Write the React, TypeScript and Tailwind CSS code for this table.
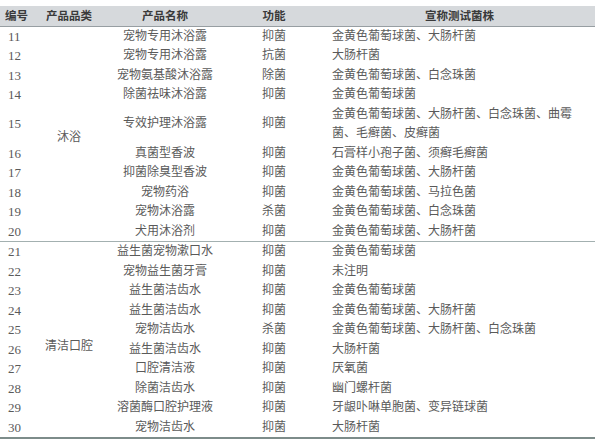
const rows1: [string, string, string, string][] = [
  ['11', '宠物专用沐浴露', '抑菌', '金黄色葡萄球菌、大肠杆菌'],
  ['12', '宠物专用沐浴露', '抗菌', '大肠杆菌'],
  ['13', '宠物氨基酸沐浴露', '除菌', '金黄色葡萄球菌、白念珠菌'],
  ['14', '除菌祛味沐浴露', '抑菌', '金黄色葡萄球菌'],
  ['15', '专效护理沐浴露', '抑菌', '金黄色葡萄球菌、大肠杆菌、白念珠菌、曲霉菌、毛癣菌、皮癣菌'],
  ['16', '真菌型香波', '抑菌', '石膏样小孢子菌、须癣毛癣菌'],
  ['17', '抑菌除臭型香波', '抑菌', '金黄色葡萄球菌、大肠杆菌'],
  ['18', '宠物药浴', '抑菌', '金黄色葡萄球菌、马拉色菌'],
  ['19', '宠物沐浴露', '杀菌', '金黄色葡萄球菌、白念珠菌'],
  ['20', '犬用沐浴剂', '抑菌', '金黄色葡萄球菌、大肠杆菌'],
];

const rows2: [string, string, string, string][] = [
  ['21', '益生菌宠物漱口水', '抑菌', '金黄色葡萄球菌'],
  ['22', '宠物益生菌牙膏', '抑菌', '未注明'],
  ['23', '益生菌洁齿水', '抑菌', '金黄色葡萄球菌'],
  ['24', '益生菌洁齿水', '抑菌', '金黄色葡萄球菌、大肠杆菌'],
  ['25', '宠物洁齿水', '杀菌', '金黄色葡萄球菌、大肠杆菌、白念珠菌'],
  ['26', '益生菌洁齿水', '抑菌', '大肠杆菌'],
  ['27', '口腔清洁液', '抑菌', '厌氧菌'],
  ['28', '除菌洁齿水', '抑菌', '幽门螺杆菌'],
  ['29', '溶菌酶口腔护理液', '抑菌', '牙龈卟啉单胞菌、变异链球菌'],
  ['30', '宠物洁齿水', '抑菌', '大肠杆菌'],
];

function Group({ label, rows, last }: { label: string; rows: [string, string, string, string][]; last?: boolean }) {
  return (
    <tbody className={last ? 'border-b-2 border-[#7d8c8a]' : 'border-b border-[#a3b0b0]'}>
      {rows.map(([no, name, fn, claim], i) => (
        <tr key={no} className="leading-[19.5px] align-middle">
          <td className="pl-[8px] text-[13px] font-['Liberation_Serif',serif]">{no}</td>
          {i === 0 && (
            <td rowSpan={rows.length} className={last ? 'text-center pt-[14px]' : 'text-center pt-[8px]'}>
              {label}
            </td>
          )}
          <td className="text-center">{name}</td>
          <td className="text-center">{fn}</td>
          <td className="pl-[16px]">
            <div className="max-w-[246px]">{claim}</div>
          </td>
        </tr>
      ))}
    </tbody>
  );
}

export default function App() {
  return (
    <div className="w-[600px] h-[448px] bg-white pt-[6px]">
      <table className="w-[595px] table-fixed border-collapse text-[12px] text-[#5a5a5a] font-['Liberation_Serif','Noto_Sans_CJK_SC',serif]">
        <colgroup>
          <col className="w-[40px]" />
          <col className="w-[58px]" />
          <col className="w-[134px]" />
          <col className="w-[84px]" />
          <col />
        </colgroup>
        <thead>
          <tr className="h-[20px] bg-[#d6d9dc] border-b border-[#979ea2] text-[11.5px] font-bold text-[#3a3a3a] font-['Noto_Sans_CJK_SC',sans-serif]">
            <th className="pl-[5px] text-left font-bold">编号</th>
            <th className="text-center font-bold">产品品类</th>
            <th className="text-center font-bold">产品名称</th>
            <th className="text-center font-bold">功能</th>
            <th className="text-center font-bold pl-[8px]">宣称测试菌株</th>
          </tr>
        </thead>
        <Group label="沐浴" rows={rows1} />
        <Group label="清洁口腔" rows={rows2} last />
      </table>
    </div>
  );
}
